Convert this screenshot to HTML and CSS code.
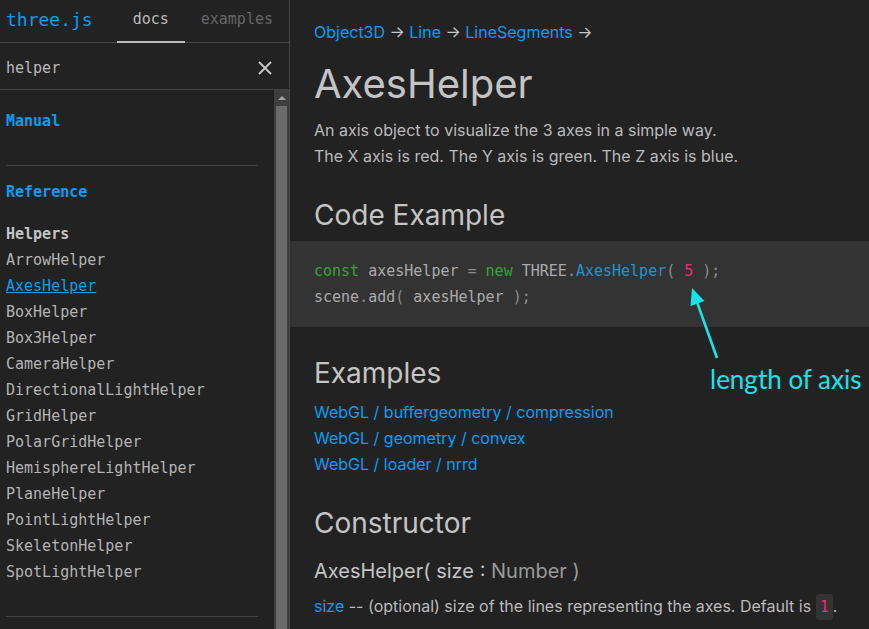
FILE: index.html
```html
<!DOCTYPE html>
<html>
<head>
<meta charset="utf-8">
<title>AxesHelper – three.js docs</title>
<link rel="stylesheet" href="styles.css">
</head>
<body>
<div class="app">
  <aside class="sidebar">
    <div class="topbar">
      <div class="logo">three.js</div>
      <div class="tab active">docs</div>
      <div class="tab">examples</div>
    </div>
    <div class="search">
      <div class="query">helper</div>
      <svg class="clear" width="14" height="14" viewBox="0 0 14 14"><path d="M1 1L13 13M13 1L1 13" stroke="#c8c8c8" stroke-width="1.8" fill="none"/></svg>
    </div>
    <div class="nav">
      <div class="navlist">
        <div class="nav-h">Manual</div>
        <div class="sep"></div>
        <div class="nav-h">Reference</div>
        <div class="group">Helpers</div>
        <div class="item">ArrowHelper</div>
        <div class="item sel">AxesHelper</div>
        <div class="item">BoxHelper</div>
        <div class="item">Box3Helper</div>
        <div class="item">CameraHelper</div>
        <div class="item">DirectionalLightHelper</div>
        <div class="item">GridHelper</div>
        <div class="item">PolarGridHelper</div>
        <div class="item">HemisphereLightHelper</div>
        <div class="item">PlaneHelper</div>
        <div class="item">PointLightHelper</div>
        <div class="item">SkeletonHelper</div>
        <div class="item">SpotLightHelper</div>
        <div class="sep"></div>
      </div>
      <div class="scrollbar">
        <div class="sb-arrow"></div>
        <div class="sb-thumb"></div>
      </div>
    </div>
  </aside>
  <main class="main">
    <div class="crumbs"><a>Object3D</a> → <a>Line</a> → <a>LineSegments</a> →</div>
    <h1 class="title">AxesHelper</h1>
    <p class="desc">An axis object to visualize the 3 axes in a simple way.<br>The X axis is red. The Y axis is green. The Z axis is blue.</p>
    <h2 class="h2">Code Example</h2>
    <pre class="code"><span class="kwd">const</span><span class="pln"> axesHelper </span><span class="pun">=</span><span class="pln"> </span><span class="kwd">new</span><span class="pln"> THREE</span><span class="pun">.</span><span class="typ">AxesHelper</span><span class="pun">(</span><span class="pln"> </span><span class="lit">5</span><span class="pln"> </span><span class="pun">);</span>
<span class="pln">scene</span><span class="pun">.</span><span class="pln">add</span><span class="pun">(</span><span class="pln"> axesHelper </span><span class="pun">);</span></pre>
    <h2 class="h2">Examples</h2>
    <div class="links">
      <a>WebGL / buffergeometry / compression</a>
      <a>WebGL / geometry / convex</a>
      <a>WebGL / loader / nrrd</a>
    </div>
    <h2 class="h2">Constructor</h2>
    <h3 class="h3">AxesHelper( size : <span class="type">Number )</span></h3>
    <p class="param"><a>size</a> -- (optional) size of the lines representing the axes. Default is <code class="inline">1</code>.</p>

    <svg class="arrow" width="50" height="90" viewBox="0 0 50 90">
      <line x1="17" y1="22" x2="37" y2="78" stroke="#16e4ea" stroke-width="2.6"/>
      <polygon points="12,8 24.5,21 10.5,26" fill="#16e4ea"/>
    </svg>
    <div class="note">length of axis</div>
  </main>
</div>
</body>
</html>
```
FILE: styles.css
```css
* { box-sizing: border-box; }
html, body { margin: 0; padding: 0; }
body {
  background: #222;
  color: #bbb;
  font-family: Inter, "Noto Sans", sans-serif;
  font-size: 16px;
  line-height: 26px;
  overflow: hidden;
}
a { color: #049ef4; text-decoration: none; }
.app { display: flex; height: 629px; }

/* sidebar */
.sidebar {
  width: 290px;
  flex: none;
  border-right: 1px solid #444;
  display: flex;
  flex-direction: column;
  font-family: "DejaVu Sans Mono", "Liberation Mono", monospace;
  font-size: 15px;
}
.topbar {
  height: 43px;
  flex: none;
  border-bottom: 1px solid #444;
  display: flex;
  align-items: flex-start;
}
.logo {
  width: 117px;
  padding-left: 6px;
  font-size: 18px;
  line-height: 40px;
  color: #049ef4;
}
.tab {
  height: 43px;
  padding: 0 16px;
  line-height: 38px;
  color: #666;
}
.tab.active {
  color: #bbb;
  border-bottom: 2px solid #bbb;
}
.search {
  height: 47px;
  flex: none;
  border-bottom: 1px solid #444;
  display: flex;
  align-items: center;
  padding: 4px 17px 0 6px;
}
.query { flex: 1; line-height: 42px; color: #bbb; }
.clear { display: block; }
.nav { flex: 1; display: flex; min-height: 0; }
.navlist { width: 274px; flex: none; padding: 18px 16px 0 6px; }
.nav-h { color: #049ef4; line-height: 26px; font-weight: bold; }
.sep { border-top: 1px solid #444; margin: 31px 0 13px; }
.group { margin-top: 16px; line-height: 26px; font-weight: bold; color: #c4c4c4; }
.item { line-height: 26px; color: #b4b4b4; }
.item.sel { color: #049ef4; text-decoration: underline; }
.scrollbar {
  width: 15px;
  flex: none;
  background: #3e3e3e;
  display: flex;
  flex-direction: column;
  align-items: center;
}
.sb-arrow {
  margin-top: 6px;
  width: 0; height: 0;
  border-left: 4px solid transparent;
  border-right: 4px solid transparent;
  border-bottom: 4px solid #a3a3a3;
}
.sb-thumb { margin-top: 6px; width: 11px; flex: 1; background: #6a6a6a; }

/* main */
.main { flex: 1; position: relative; padding-top: 19px; min-width: 0; }
.crumbs { padding: 0 24px; color: #c8c8c8; }
.title {
  margin: 15px 0 0;
  padding: 0 24px;
  font-size: 40px;
  line-height: 48px;
  font-weight: 400;
  color: #c4c4c4;
}
.desc { margin: 9px 0 0; padding: 0 24px; }
.h2 {
  margin: 28px 0 0;
  padding: 0 24px;
  font-size: 28px;
  line-height: 36px;
  font-weight: 400;
  color: #c4c4c4;
}
.code {
  margin: 8px 0 0;
  padding: 17px 24px;
  background: #333;
  font-family: "DejaVu Sans Mono", "Liberation Mono", monospace;
  font-size: 15px;
  line-height: 26px;
}
.pln { color: #aaa; }
.pun { color: #8c8c8c; }
.kwd { color: #30a830; }
.typ { color: #2194ce; }
.lit { color: #f0287a; }
.links { margin-top: 8px; padding: 0 24px; display: flex; flex-direction: column; align-items: flex-start; }
.h3 {
  margin: 16px 0 0;
  padding: 0 24px;
  font-size: 20px;
  line-height: 28px;
  font-weight: 400;
  color: #c4c4c4;
}
.type { color: #9a9a9a; }
.param { margin: 8px 0 0; padding: 0 24px; }
.inline {
  font-family: "DejaVu Sans Mono", "Liberation Mono", monospace;
  font-size: 15px;
  color: #f0287a;
  background: #333;
  border-radius: 3px;
  padding: 4px 4px;
}
.arrow { position: absolute; left: 390px; top: 280px; }
.note {
  position: absolute;
  left: 420px;
  top: 366px;
  font-family: Lato, "Open Sans", sans-serif;
  font-size: 26px;
  line-height: 26px;
  color: #16e4ea;
  white-space: nowrap;
}
```
